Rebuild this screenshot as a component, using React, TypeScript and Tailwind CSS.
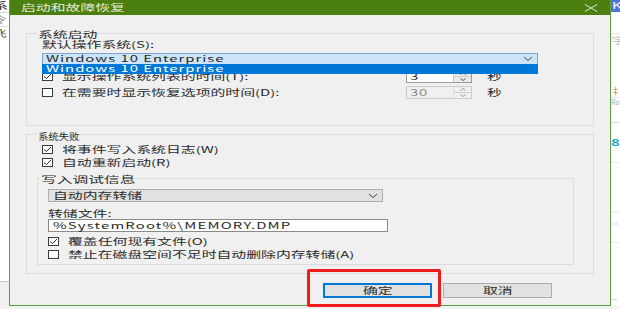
import React from "react";

const SCALES: Record<string, string> = {
  base: "scale-x-[1.65]",
  small: "scale-x-[1.15]",
  wide: "scale-x-[1.75]",
};

const T = ({ children, className = "", s = "base" }: { children: React.ReactNode; className?: string; s?: string }) => (
  <span className={`inline-block origin-left whitespace-nowrap leading-[12px] ${SCALES[s]} ${className}`}>{children}</span>
);

const L = ({ children, s = "base" }: { children: React.ReactNode; s?: string }) => (
  <span className={`inline-block origin-left whitespace-nowrap leading-[10px] ${SCALES[s]}`}>{children}</span>
);

const Check = ({ checked }: { checked?: boolean }) => (
  <span className="w-[11px] h-[9px] shrink-0 border border-[#3a3a3a] bg-white flex items-center justify-center">
    {checked && (
      <svg width="9" height="7" viewBox="0 0 9 7">
        <polyline points="1,3.5 3.5,5.5 8,1" fill="none" stroke="#333333" strokeWidth="1" />
      </svg>
    )}
  </span>
);

const Chevron = () => (
  <svg width="10" height="6" viewBox="0 0 10 6">
    <polyline points="1,1 5,4.5 9,1" fill="none" stroke="#444444" strokeWidth="1" />
  </svg>
);

const CheckRow = ({ checked, label }: { checked?: boolean; label: string }) => (
  <div className="h-[13px] flex items-center">
    <Check checked={checked} />
    <span className="ml-[9px]">
      <T>{label}</T>
    </span>
  </div>
);

const Spin = ({ value, disabled }: { value: string; disabled?: boolean }) => (
  <div
    className={`w-[66px] h-[13px] flex border ${disabled ? "border-[#cccccc] bg-[#f0f0f0] text-[#8a8a8a]" : "border-[#9a9a9a] bg-white text-[#333333]"}`}
  >
    <div className="w-[46px] flex items-center pl-[3px]">
      <T className="tracking-[0.5px]">{value}</T>
    </div>
    <div className={`flex-1 flex flex-col border-l ${disabled ? "border-[#dddddd]" : "border-[#c8c8c8] bg-[#eaeaea]"}`}>
      <div className="flex-1 flex items-center justify-center border-b border-[#d0d0d0]">
        <svg width="6" height="3" viewBox="0 0 6 3">
          <polyline points="0.5,2.5 3,0.5 5.5,2.5" fill="none" stroke={disabled ? "#999999" : "#555555"} strokeWidth="1" />
        </svg>
      </div>
      <div className="flex-1 flex items-center justify-center">
        <svg width="6" height="3" viewBox="0 0 6 3">
          <polyline points="0.5,0.5 3,2.5 5.5,0.5" fill="none" stroke={disabled ? "#999999" : "#555555"} strokeWidth="1" />
        </svg>
      </div>
    </div>
  </div>
);

export default function App() {
  return (
    <div className="w-[620px] h-[309px] flex overflow-hidden bg-[#f3f3f3] relative font-[family-name:'Noto_Sans_CJK_SC','Noto_Sans',sans-serif] text-[9px] text-[#2a2a2a]">
      {/* left background window */}
      <div className="w-[9px] h-[306px] shrink-0 bg-white flex flex-col overflow-hidden">
        <div className="h-[13px] flex items-center border-b border-[#d6d6d6] overflow-hidden">
          <span className="-ml-[7px] text-[#222222]"><T>系</T></span>
        </div>
        <div className="h-[14px] flex items-center border-b border-[#e2e2e2] overflow-hidden">
          <span className="-ml-[8px] text-[#9a9a9a]"><T>令</T></span>
        </div>
        <div className="h-[14px] flex items-center overflow-hidden">
          <span className="-ml-[8px] text-[#555555]"><T>飞</T></span>
        </div>
        <div className="flex-1" />
        <div className="h-[25px] border-t border-[#c8c8c8] bg-[#f0f0f0]" />
      </div>

      {/* dialog */}
      <div className="w-[602px] h-[306px] shrink-0 flex flex-col border-x border-b border-[#5f9f48]">
        <div className="h-[15px] bg-[#4b7f10] flex items-center justify-between pl-[11px] pr-[12px] text-[#e4ecd6]">
          <T>启动和故障恢复</T>
          <svg width="14" height="8" viewBox="0 0 14 8">
            <line x1="1" y1="0.5" x2="13" y2="7.5" stroke="#dfe8d2" strokeWidth="1" />
            <line x1="13" y1="0.5" x2="1" y2="7.5" stroke="#dfe8d2" strokeWidth="1" />
          </svg>
        </div>

        <div className="flex-1 bg-[#f0f0f0] px-[16px] pt-[18px] flex flex-col">
          {/* group 1 */}
          <div className="relative h-[93px] border border-[#dcdcdc]">
            <span className="absolute -top-[6px] left-[10px] bg-[#f0f0f0] px-[1px]">
              <L>系统启动</L>
            </span>
            <div className="pl-[15px] pt-[5px] flex flex-col">
              <div className="h-[11px] flex items-center">
                <T>默认操作系统(S):</T>
              </div>
              <div className="relative mt-[3px] w-[496px] h-[12px] border border-[#7fa3cf] bg-[#cce4f7] flex items-center justify-between pl-[3px] pr-[4px]">
                <T className="tracking-[0.6px]">Windows 10 Enterprise</T>
                <Chevron />
                <div className="absolute left-[-1px] top-full w-[496px] h-[10px] bg-[#0078d7] text-white flex items-center pl-[4px] z-10">
                  <T className="tracking-[0.6px]">Windows 10 Enterprise</T>
                </div>
              </div>
              <div className="mt-[5px] h-[13px] flex items-center">
                <div className="w-[364px] flex items-center">
                  <Check checked />
                  <span className="ml-[9px]"><T>显示操作系统列表的时间(T):</T></span>
                </div>
                <Spin value="3" />
                <span className="ml-[15px]"><T>秒</T></span>
              </div>
              <div className="mt-[3px] h-[13px] flex items-center">
                <div className="w-[364px] flex items-center">
                  <Check />
                  <span className="ml-[9px]"><T>在需要时显示恢复选项的时间(D):</T></span>
                </div>
                <Spin value="30" disabled />
                <span className="ml-[15px]"><T>秒</T></span>
              </div>
            </div>
          </div>

          {/* group 2 */}
          <div className="relative mt-[8px] h-[140px] border border-[#dcdcdc]">
            <span className="absolute -top-[5px] left-[10px] bg-[#f0f0f0] px-[1px]">
              <L s="small">系统失败</L>
            </span>
            <div className="pl-[10px] pt-[8px] flex flex-col">
              <div className="pl-[5px]">
                <CheckRow checked label="将事件写入系统日志(W)" />
                <CheckRow checked label="自动重新启动(R)" />
              </div>
              <div className="relative mt-[9px] w-[537px] h-[87px] border border-[#dcdcdc]">
                <span className="absolute -top-[6px] left-[2px] bg-[#f0f0f0] px-[1px]">
                  <L s="wide">写入调试信息</L>
                </span>
                <div className="pl-[10px] pt-[10px] flex flex-col">
                  <div className="w-[335px] h-[13px] border border-[#adadad] bg-[#e1e1e1] flex items-center justify-between pl-[4px] pr-[4px]">
                    <T>自动内存转储</T>
                    <Chevron />
                  </div>
                  <div className="mt-[6px] h-[11px] flex items-center">
                    <T>转储文件:</T>
                  </div>
                  <div className="w-[340px] h-[13px] border border-[#8a8a8a] bg-white flex items-center pl-[4px]">
                    <T className="tracking-[0.7px]">%SystemRoot%\MEMORY.DMP</T>
                  </div>
                  <div className="mt-[3px]">
                    <CheckRow checked label="覆盖任何现有文件(O)" />
                    <CheckRow label="禁止在磁盘空间不足时自动删除内存转储(A)" />
                  </div>
                </div>
              </div>
            </div>
          </div>

          {/* buttons */}
          <div className="mt-[9px] h-[15px] flex justify-end pr-[42px] gap-[11px]">
            <div className="w-[109px] h-[15px] border-2 border-[#0078d7] bg-[#e1e1e1] flex items-center justify-center">
              <span className="w-[30px]"><T>确定</T></span>
            </div>
            <div className="w-[109px] h-[15px] border border-[#adadad] bg-[#e1e1e1] flex items-center justify-center">
              <span className="w-[30px]"><T>取消</T></span>
            </div>
          </div>
        </div>
      </div>

      {/* right background window */}
      <div className="w-[9px] h-[306px] shrink-0 bg-white flex flex-col overflow-hidden">
        <div className="h-[12px] bg-[#4c74dc] flex items-center overflow-hidden text-white">
          <span className="ml-[1px]"><T>K</T></span>
        </div>
        <div className="h-[22px] border-b border-[#eeeeee]" />
        <div className="h-[14px] flex items-center overflow-hidden text-[#c4c4c4]">
          <T>字</T>
        </div>
        <div className="h-[50px] border-b border-[#e6e6e6] flex items-end pb-[1px]">
          <span className="text-[#d08040] text-[9px] leading-[10px]">‡</span>
        </div>
        <div className="h-[25px] border-b border-[#dddddd] text-[#aaaaaa] text-[7px] leading-[9px]">
          Ro
        </div>
        <div className="h-[40px] flex items-center border-b border-[#eeeeee] text-[#1b9fd0] font-bold">
          <T>8</T>
        </div>
        <div className="h-[50px] border-b border-[#eeeeee]" />
        <div className="h-[30px] border-b border-[#eeeeee] text-[#d8e4ee] text-[7px] leading-[20px]">
          xx
        </div>
        <div className="flex-1 flex items-end pb-[3px] text-[#aaaaaa] text-[7px]">—</div>
      </div>

      {/* red highlight */}
      <div className="absolute left-[307px] top-[269px] w-[134px] h-[38px] border-[3px] border-[#ee1c1c] rounded-[2px]" />
    </div>
  );
}
